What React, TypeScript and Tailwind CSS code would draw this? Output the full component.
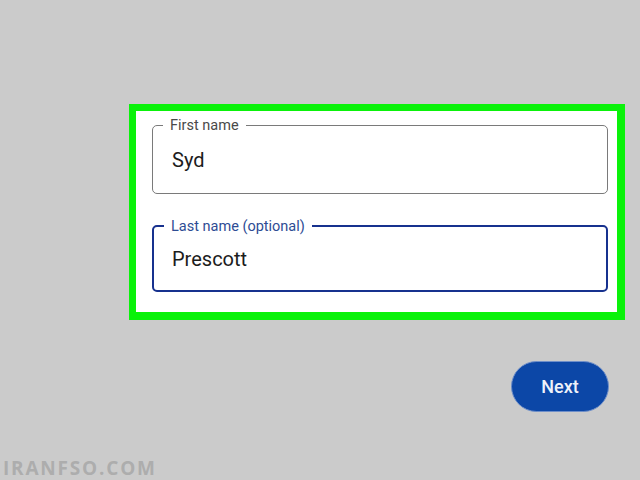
import React from 'react';

interface OutlinedFieldProps {
    label: string;
    value: string;
    focused?: boolean;
}

const OutlinedField = ({ label, value, focused }: OutlinedFieldProps) => (
    <div
        className={`relative flex items-center rounded-[5px] bg-white ${focused ? 'h-[67px] border-2 border-[#17318e] pl-[18px]' : 'h-[69px] border border-[#7a7a7a] pl-[19px]'}`}
    >
        <span
            className={`absolute left-[10px] top-0 -translate-y-1/2 bg-white px-[7px] text-[14.5px] leading-none ${focused ? 'text-[#2e4c94]' : 'text-[#4a4a4a]'}`}
        >
            {label}
        </span>
        <span className="text-[20px] leading-none text-[#1c1c1c]">{value}</span>
    </div>
);

const App = () => {
    return (
        <div
            className="relative w-[640px] h-[480px] overflow-hidden bg-[#cbcbcb]"
            style={{ fontFamily: 'Roboto, "Noto Sans", sans-serif' }}
        >
            <div className="flex flex-col pt-[104px]">
                <div className="ml-[129px] w-[496px] h-[216px] border-[7px] border-r-[8px] border-b-[8px] border-[#0af20a] bg-white pt-[14px] pl-4 pr-[9px]">
                    <div className="flex flex-col gap-[31px]">
                        <OutlinedField label="First name" value="Syd" />
                        <OutlinedField label="Last name (optional)" value="Prescott" focused />
                    </div>
                </div>

                <div className="flex justify-end mt-[41px] pr-[31px]">
                    <button className="w-[98px] h-[51px] rounded-full bg-[#0c47a7] border border-[#6f8fc9] text-[18px] font-medium text-[#eef2fa]">
                        Next
                    </button>
                </div>
            </div>

            <div
                className="absolute left-[3px] bottom-[2px] text-[19px] font-bold leading-none tracking-[1.8px] text-[#adadad]"
                style={{ fontFamily: '"Open Sans", sans-serif' }}
            >
                IRANFSO.COM
            </div>
        </div>
    );
};

export default App;
